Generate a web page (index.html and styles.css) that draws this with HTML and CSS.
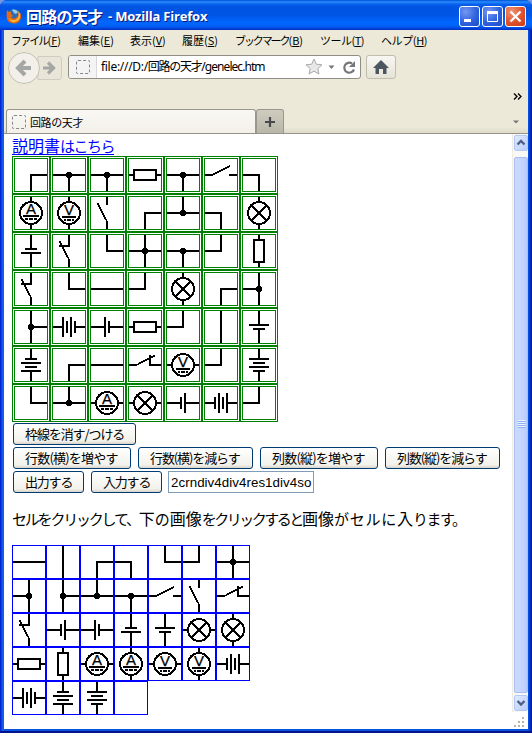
FILE: index.html
```html
<!DOCTYPE html>
<html lang="ja">
<head>
<meta charset="utf-8">
<title>回路の天才</title>
<link rel="stylesheet" href="styles.css">
</head>
<body>
<svg class="defs" width="0" height="0">
  <defs>
    <g id="U"><path d="M16 0V17"/></g>
    <g id="D"><path d="M16 15V32"/></g>
    <g id="L"><path d="M0 16H17"/></g>
    <g id="R"><path d="M15 16H32"/></g>
    <g id="dot"><path class="fill" d="M14 13H18V14H19V18H18V19H14V18H13V14H14Z"/></g>
    <g id="stubH"><path d="M0 16H5M27 16H32"/></g>
    <g id="stubV"><path d="M16 0V5M16 27V32"/></g>
    <g id="resH"><path d="M0 16H4M28 16H32"/><rect x="5" y="11" width="22" height="10"/></g>
    <g id="resV"><path d="M16 0V4M16 28V32"/><rect x="11" y="5" width="10" height="22"/></g>
    <g id="lamp"><circle cx="16" cy="16" r="11"/><path d="M8.5 8.5L23.5 23.5M23.5 8.5L8.5 23.5"/></g>
    <g id="amm"><circle cx="16" cy="16" r="11"/><text x="16" y="17">A</text><path d="M8 19H24M10 22H13M14 22H18M19 22H22"/></g>
    <g id="volt"><circle cx="16" cy="16" r="11"/><text x="16" y="18">V</text><path d="M9 20H23M11 23H13M14 23H18M19 23H21"/></g>
    <g id="openH"><path d="M0 16H8M24 16H32"/><path class="lever" d="M7.5 16L25.5 6.5"/></g>
    <g id="openV"><path d="M16 0V8M16 24V32"/><path class="lever" d="M6.5 6L16 24.5"/></g>
    <g id="closedH"><path d="M0 16H8M32 16H21V6"/><path class="lever" d="M7.5 16L26 6.5"/></g>
    <g id="closedV"><path d="M16 0V11H6M16 24V32"/><path class="lever" d="M6.5 6L16 24.5"/></g>
    <g id="cellSL"><path d="M0 16H13M19 16H32M14 10V22M18 6V26"/></g>
    <g id="cellLS"><path d="M0 16H13M19 16H32M14 6V26M18 10V22"/></g>
    <g id="batSL"><path d="M0 16H9M23 16H32M10 10V22M14 6V26M18 10V22M22 6V26"/></g>
    <g id="batLS"><path d="M0 16H9M23 16H32M10 6V26M14 10V22M18 6V26M22 10V22"/></g>
    <g id="vcellSL"><path d="M16 0V13M16 19V32M10 14H22M6 18H26"/></g>
    <g id="vcellLS"><path d="M16 0V13M16 19V32M6 14H26M10 18H22"/></g>
    <g id="vbatSL"><path d="M16 0V9M16 23V32M10 10H22M6 14H26M10 18H22M6 22H26"/></g>
    <g id="vbatLS"><path d="M16 0V9M16 23V32M6 10H26M10 14H22M6 18H26M10 22H22"/></g>
  </defs>
</svg>
<div class="window">
  <header class="titlebar">
    <svg class="fox" width="16" height="16" viewBox="0 0 16 16"><circle cx="8" cy="8" r="7" fill="#2c6cb8"/><path d="M6 2C8 1 11 2 12 4L10 6L8 5Z" fill="#8fd0ee"/><path d="M1 2L3 4L5 3.500L5 6L7 8L5 9Q8 12 11 9Q13 7 12 3Q16 6 15 10Q13 16 8 15.500Q1 15 .7 9Q.3 5 1 2Z" fill="#e66a13"/><path d="M12 3Q14 8 11 11Q7 14 3 10Q5 15 9 14Q15 12 14 6Z" fill="#fdbd30"/></svg>
    <h1 class="title"><span class="title-jp">回路の天才</span><span class="title-en">- Mozilla Firefox</span></h1>
    <div class="controls">
      <i class="ctl"><svg width="19" height="19"><path d="M4 13.500H11" stroke="#fff" stroke-width="3"/></svg></i>
      <i class="ctl"><svg width="19" height="19"><path d="M4 5.500H15" stroke="#fff" stroke-width="3"/><path d="M4.500 5V14.500H14.500V5" fill="none" stroke="#fff"/></svg></i>
      <i class="ctl close"><svg width="19" height="19"><path d="M4.500 4.500L14.500 14.500M14.500 4.500L4.500 14.500" stroke="#fff" stroke-width="2.300"/></svg></i>
    </div>
  </header>
  <nav class="menu">
    <span class="m1">ファイル<b>(<u>F</u>)</b></span><span>編集(<u>E</u>)</span><span>表示(<u>V</u>)</span><span>履歴(<u>S</u>)</span><span class="m5">ブックマーク<b>(<u>B</u>)</b></span><span class="m6">ツール(<u>T</u>)</span><span class="m7">ヘルプ(<u>H</u>)</span>
  </nav>
  <div class="toolbar">
    <svg class="history" width="56" height="34" viewBox="0 0 56 34"><path d="M30 5.500H51Q53.500 5.500 53.500 8V25Q53.500 28.500 51 28.500H30Z" fill="#e9e6d9" stroke="#cfccc0"/><circle cx="16" cy="17" r="15.500" fill="#f2f0e8" stroke="#c2c0b7"/><path d="M23 17H11M17 10L10 17L17 24" fill="none" stroke="#a5a7a5" stroke-width="4"/><path d="M35 17H44M40 11.500L45.500 17L40 22.500" fill="none" stroke="#a5a7a5" stroke-width="3.200"/></svg>
    <div class="url">
      <div class="identity"><i class="blank"></i></div>
      <span class="address">file:///D:/<span class="addr-jp">回路の天才</span><span class="addr-file">/genelec.htm</span></span>
      <svg width="57" height="22" viewBox="0 0 57 22"><path d="M11 3L13.300 8.200L19 8.800L14.800 12.600L16 18L11 15.200L6 18L7.200 12.600L3 8.800L8.700 8.200Z" fill="#e8e8e8" stroke="#aaa"/><path d="M25.500 9.500H31.500L28.500 13Z" fill="#777"/><path d="M49 7.500A5 5 0 1 0 51 13.500" fill="none" stroke="#74787b" stroke-width="2.200"/><path d="M52 5V11H46Z" fill="#74787b"/></svg>
    </div>
    <div class="home"><svg width="16" height="14" viewBox="0 0 16 14"><path d="M8 0L16 8H13.500V14H10V9H6V14H2.500V8H0Z" fill="#4b5661"/></svg></div>
  </div>
  <div class="bookmarks"><svg width="9" height="7"><path d="M1 .5L4 3.500L1 6.500M5 .5L8 3.500L5 6.500" fill="none" stroke="#000" stroke-width="1.300"/></svg></div>
  <div class="tabs">
    <div class="tab"><i class="blank"></i><span>回路の天才</span></div>
    <div class="newtab"><svg width="12" height="12"><path d="M6 1V11M1 6H11" stroke="#484b4c" stroke-width="2.200"/></svg></div>
    <svg class="tabmenu" width="6" height="4"><path d="M0 .5H6L3 3.500Z" fill="#777"/></svg>
  </div>
  <div class="view">
    <main class="page">
      <a class="help">説明書<span>はこちら</span></a>
      <div class="circuit" id="circuit"></div>
      <div class="row"><button class="b1">枠線を消す/つける</button></div>
      <div class="row"><button class="b2">行数(横)を増やす</button><button class="b3">行数(横)を減らす</button><button class="b2">列数(縦)を増やす</button><button class="b3">列数(縦)を減らす</button></div>
      <div class="row"><button class="b4">出力する</button><button class="b4">入力する</button><div class="code">2crndiv4div4res1div4so</div></div>
      <p class="note"><span class="k1">セルをクリックして、</span>下<span>の</span>画像<span class="k2">をクリックすると</span>画像<span class="k3">がセルに</span>入<span class="k4">ります。</span></p>
      <div class="palette" id="palette"></div>
    </main>
    <aside class="side">
      <div class="scroll">
        <i class="arrow"><svg width="14" height="15"><path d="M3.500 9.500L7 6L10.500 9.500" fill="none" stroke="#4d6185" stroke-width="2.400"/></svg></i>
        <i class="thumb"><b></b></i>
        <i class="arrow"><svg width="14" height="15"><path d="M3.500 6L7 9.500L10.500 6" fill="none" stroke="#4d6185" stroke-width="2.400"/></svg></i>
      </div>
      <svg class="grip" width="12" height="12"><path d="M8 1H10M4 5H6M8 5H10M0 9H2M4 9H6M8 9H10" stroke="#b8b4a2" stroke-width="2"/></svg>
    </aside>
  </div>
</div>
<script src="circuit.js"></script>
</body>
</html>
```
FILE: styles.css
```css
* { box-sizing: border-box; }
body { margin: 0; background: #7a96df; font-family: "Liberation Sans", "Noto Sans CJK JP", sans-serif; color: #000; }
.defs { position: absolute; }
.window { width: 532px; height: 733px; display: flex; flex-direction: column; padding: 0 4px 4px; background: linear-gradient(90deg, #0019cf 0, #0831d9 1px, #166aee 3px, #0855dd 4px, #0855dd 528px, #0048f0 529px, #001ea0 531px, #00138c 532px); border-radius: 7px 7px 0 0; overflow: hidden; box-shadow: inset 0 -2px #00138c; }
.titlebar { height: 30px; flex: none; margin: 0 -4px; padding: 0 6px 0 6px; display: flex; align-items: center; background: linear-gradient(#0050d8 0, #2b8dff 2px, #0a62ee 4px, #0054e3 7px, #0055e5 15px, #0066ff 22px, #0062f5 26px, #003dd7 29px, #002db0 30px); }
.fox { flex: none; margin-top: 1px; }
.title { margin: 2px 0 0 4px; flex: 1; display: flex; align-items: center; color: #fff; text-shadow: 1px 1px #0a1883; white-space: nowrap; }
.title-jp { width: 82px; font: 700 16px/22px "Noto Sans CJK JP", sans-serif; letter-spacing: -.7px; }
.title-en { font: 700 13px/22px "Open Sans", sans-serif; letter-spacing: -.2px; }
.controls { display: flex; gap: 2px; padding-top: 3px; }
.ctl { width: 21px; height: 21px; border: 1px solid #fff; border-radius: 3px; background: radial-gradient(circle at 30% 25%, #7598f0, #2f62df 55%, #1b4cc8); }
.ctl svg { display: block; }
.close { background: radial-gradient(circle at 30% 25%, #ef9375, #e0522c 55%, #c83c14); }
.menu { height: 21px; flex: none; background: #ece9d8; display: grid; grid-template-columns: 67px 52px 52px 53px 85px 61px 50px; padding-left: 7px; font: 11px/20px "Noto Sans CJK JP", sans-serif; white-space: nowrap; }
.menu u { text-underline-offset: 1px; }
.menu b { font-weight: 400; letter-spacing: 0; }
.m1 { letter-spacing: -1.900px; }
.m5 { letter-spacing: -2.100px; }
.m6 { letter-spacing: -.5px; }
.m7 { letter-spacing: -.4px; }
.toolbar { height: 34px; flex: none; background: #ece9d8; display: flex; align-items: center; padding: 0 0 2px 4px; }
.history { margin-top: 1px; }
.url { width: 293px; height: 24px; margin-left: 4px; border: 1px solid #8e8d86; border-radius: 3px; background: #fff; display: flex; align-items: center; overflow: hidden; }
.identity { width: 28px; height: 22px; border-right: 1px solid #d8d8d8; background: #f4f4f4; display: flex; align-items: center; justify-content: center; }
.blank { flex: none; width: 14px; height: 14px; border: 1px dashed #85878a; border-radius: 2px; }
.address { flex: 1; padding-left: 4px; font: 12px/22px "Noto Sans", sans-serif; letter-spacing: -.3px; white-space: nowrap; }
.addr-jp { font: 12px "Noto Sans CJK JP", sans-serif; letter-spacing: -1.3px; }
.addr-file { letter-spacing: -.95px; }
.home { width: 30px; height: 24px; margin-left: 5px; border: 1px solid #c0bdb0; border-radius: 3px; background: linear-gradient(#f8f7f3, #e6e3d6); display: flex; align-items: center; justify-content: center; }
.bookmarks { height: 24px; flex: none; background: #ece9d8; display: flex; justify-content: flex-end; padding: 8px 6px 0 0; }
.tabs { height: 25px; flex: none; background: linear-gradient(#ece9d8 18px, #dedbcb); border-bottom: 1px solid #969489; display: flex; padding-left: 2px; }
.tab { width: 250px; height: 24px; border: 1px solid #9a988e; border-bottom: 0; border-radius: 3px 3px 0 0; background: linear-gradient(#f9f8f4, #f3f0e9); display: flex; align-items: center; gap: 4px; padding-left: 5px; font: 11px/22px "Noto Sans CJK JP", sans-serif; letter-spacing: -.4px; }
.newtab { width: 28px; height: 24px; border: 1px solid #9a988e; border-bottom: 0; border-radius: 3px 3px 0 0; background: linear-gradient(#ceccbf, #b9b7a9); display: flex; align-items: center; justify-content: center; }
.tabmenu { margin: 11px 9px 0 auto; }
.view { flex: 1; min-height: 0; background: #fff; display: flex; }
.page { width: 508px; padding: 0 0 0 8px; }
.help { display: block; height: 22px; font: 16px/22px "Noto Sans CJK JP", sans-serif; color: #00f; width: 102px; white-space: nowrap; box-shadow: inset 0 -1px #fff, inset 0 -2px #00f; }
.help span { font-size: 15px; letter-spacing: -1.500px; }
.circuit { display: grid; grid-template-columns: repeat(7, 38px); }
.circuit svg { display: block; width: 38px; height: 38px; border: 3px double #008000; }
.palette { display: grid; grid-template-columns: repeat(7, 34px); }
.palette svg { display: block; width: 34px; height: 34px; border: 1px solid #00f; }
.circuit svg, .palette svg { fill: none; stroke: #000; stroke-width: 2; shape-rendering: crispEdges; }
.fill { fill: #000; stroke: none; }
.lever { stroke-width: 1.700; }
svg text { font: 15px "Liberation Sans", sans-serif; fill: #000; stroke: #000; stroke-width: .25; text-anchor: middle; }
.row { height: 24px; display: flex; gap: 7px; padding: 1px 0 1px 1px; }
button { height: 22px; padding: 0 0 0 11px; border: 1px solid #003c74; border-radius: 3px; background: linear-gradient(#fff, #f2f1ea 85%, #d8d3c8); color: #000; font: 13px/18px "Noto Sans CJK JP", sans-serif; white-space: nowrap; text-align: left; }
.b1 { width: 123px; letter-spacing: -1.100px; }
.b2 { width: 118px; letter-spacing: -.8px; }
.b3 { width: 115px; letter-spacing: -1.100px; }
.b4 { width: 71px; letter-spacing: -1.200px; }
.code { width: 146px; height: 22px; margin-left: -1px; border: 1px solid #7f9db9; padding-left: 2px; font: 13.333px/21px "Liberation Sans", sans-serif; letter-spacing: .05px; white-space: nowrap; overflow: hidden; }
.note { margin: 14px 0 16px; height: 21px; font: 16px/20px "Noto Sans CJK JP", sans-serif; white-space: nowrap; }
.note span { font-size: 15px; }
.note .k1 { letter-spacing: -2.200px; }
.note .k2 { letter-spacing: -2.500px; }
.note .k3 { letter-spacing: .8px; }
.note .k4 { letter-spacing: -1.500px; }
.side { width: 16px; display: flex; flex-direction: column; align-items: center; justify-content: space-between; }
.scroll { width: 16px; height: 578px; padding: 1px 0 0 1px; border-left: 1px solid #eeede5; background: #f8f8f4; display: flex; flex-direction: column; }
.arrow { width: 14px; height: 16px; border: 1px solid #b4c8f6; border-radius: 2px; background: linear-gradient(135deg, #e1eafe, #b9cdfa); }
.arrow svg { display: block; margin: -1px; }
.thumb { width: 14px; height: 536px; margin: 6px 0 2px; padding-bottom: 3px; border: 1px solid #a9bff0; border-radius: 2px; background: linear-gradient(90deg, #cbdafd, #c4d4fd 60%, #b7cbfb); display: flex; align-items: center; justify-content: center; }
.thumb b { width: 7px; height: 8px; background: repeating-linear-gradient(#eef4fe 0 1px, #8cb0f8 1px 2px); }
```
FILE: circuit.js
```js
// Every cell lists the ids of the parts drawn in it.
const circuit = [
  "R D|L R D dot|L R D dot|resH|L R D dot|openH|L D",
  "stubV amm|stubV volt|openV|R D|U L R dot|L D|stubV lamp",
  "vcellSL|closedV|U R|U D L R dot|L R D dot|U L|resV",
  "closedV|U R|L R|U L|stubV lamp|R D|U D L dot",
  "U D R dot|batLS|cellLS|resH|U L|U D|vcellLS",
  "vbatSL|R D|L R|closedH|stubH volt|U L|vbatLS",
  "U R|U L R dot|stubH amm|stubH lamp|cellSL|batSL|U L"
];
const palette = [
  "L R|U D|R D|L D|U R|U L|U D L R dot",
  "U D L dot|U D R dot|U L R dot|L R D dot|openH|openV|closedH",
  "closedV|cellSL|cellLS|vcellSL|vcellLS|stubH lamp|stubV lamp",
  "resH|resV|stubH amm|stubV amm|stubH volt|stubV volt|batSL",
  "batLS|vbatSL|vbatLS|"
];
function draw(id, rows) {
  document.getElementById(id).innerHTML = rows.flatMap(r => r.split("|")).map(cell =>
    "<svg viewBox='0 0 32 32'>" + cell.split(" ").filter(Boolean).map(p => `<use href="#${p}"/>`).join("") + "</svg>"
  ).join("");
}
draw("circuit", circuit);
draw("palette", palette);
```
